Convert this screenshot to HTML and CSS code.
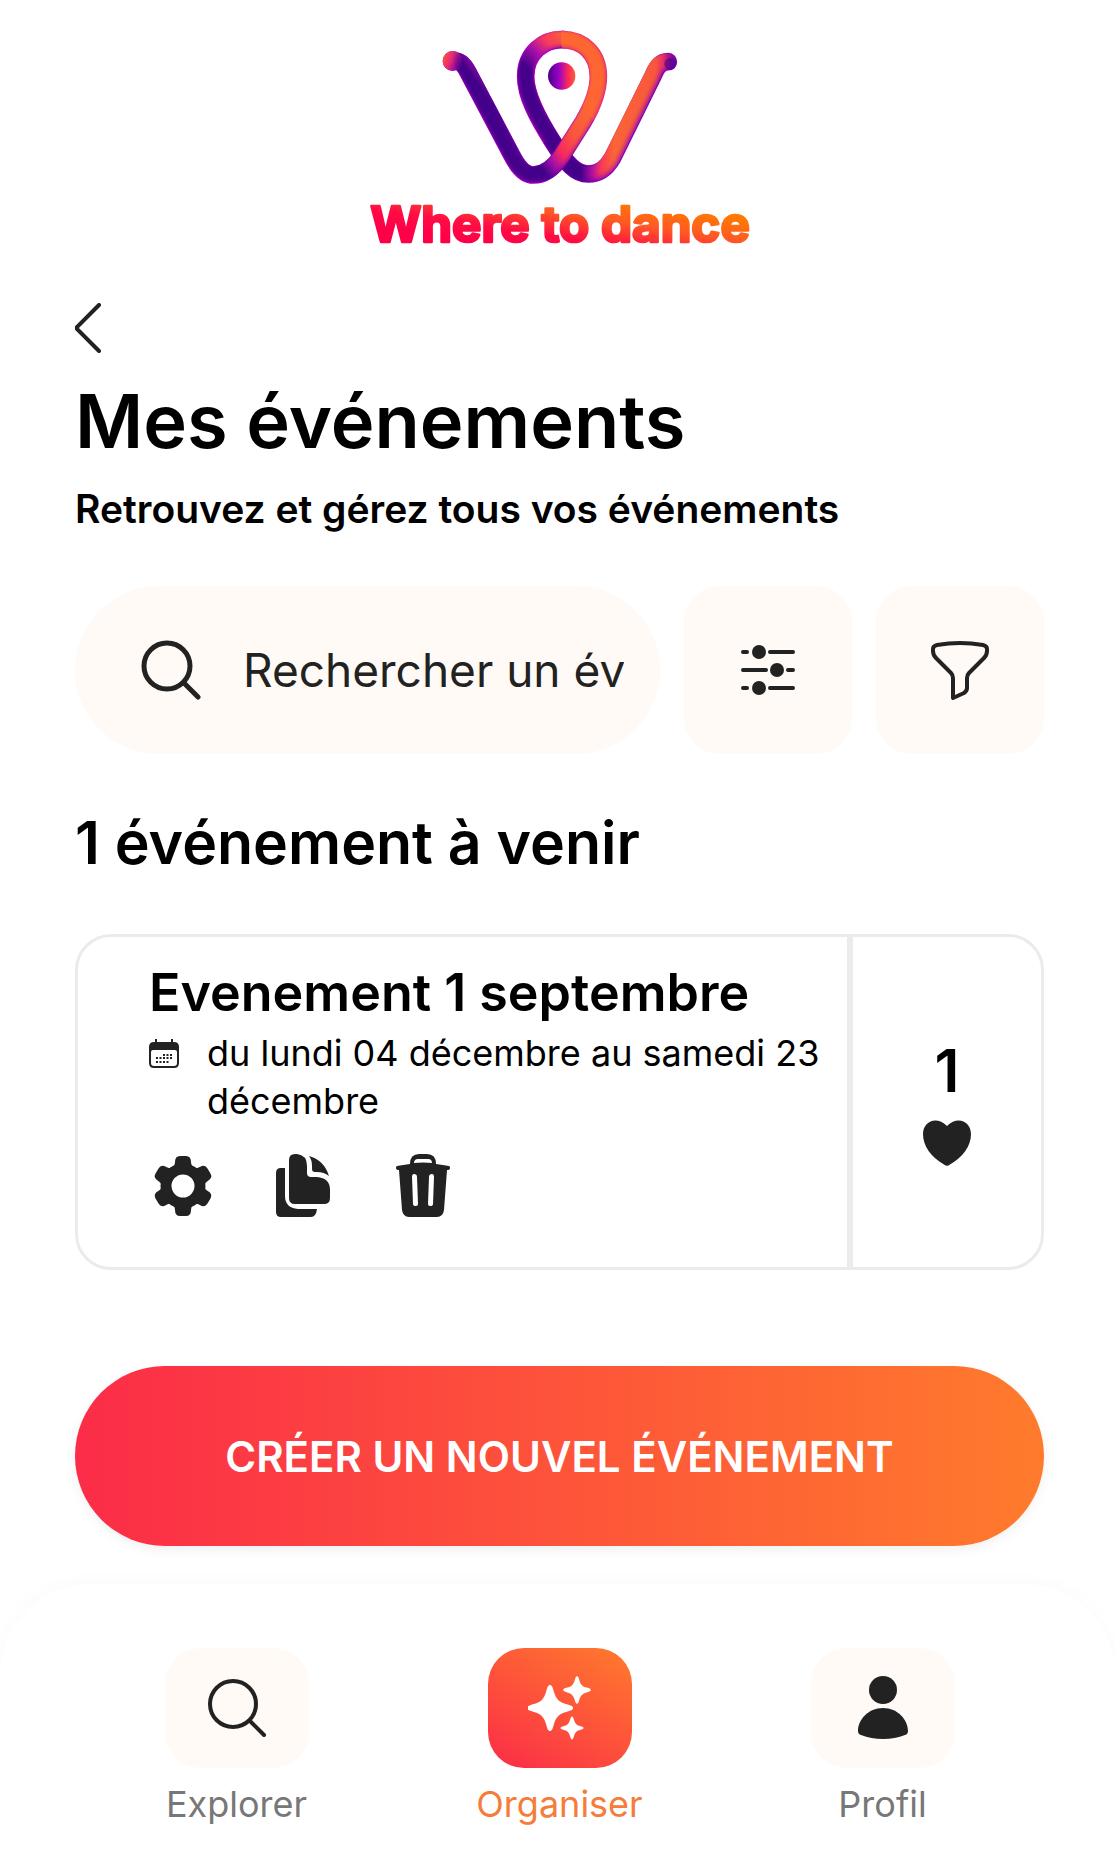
FILE: index.html
```html
<!DOCTYPE html>
<html lang="fr">
<head>
<meta charset="utf-8">
<meta name="viewport" content="width=device-width, initial-scale=1">
<title>Mes événements – Where to dance</title>
<link rel="stylesheet" href="styles.css">
</head>
<body>
<header class="header">
  <svg class="logo" viewBox="0 0 1320 750" role="img" aria-label="Where to dance">
    <defs>
      <path id="front" d="M345 153C362 153 373 166 383 185L515 435C536 476 556 495 580 495C612 495 642 472 665 438L730 335C762 280 775 240 775 200C775 130 727 89 666 89"/>
      <path id="back" d="M672 89C610 86 557 130 557 200C557 255 590 320 640 398C678 458 705 492 745 492C780 492 800 474 817 445L940 196C951 170 962 155 985 155"/>
      <linearGradient id="frontEdge" gradientUnits="userSpaceOnUse" x1="560" y1="480" x2="760" y2="330">
        <stop offset="0" stop-color="#a800c0"/><stop offset=".16" stop-color="#60009c"/><stop offset=".5" stop-color="#8000b0"/><stop offset="1" stop-color="#b000c0"/><stop offset="1.4" stop-color="#e02080"/>
      </linearGradient>
      <linearGradient id="frontCore" gradientUnits="userSpaceOnUse" x1="560" y1="480" x2="760" y2="330">
        <stop offset="0" stop-color="#400088"/><stop offset=".15" stop-color="#400088"/><stop offset=".3" stop-color="#a810a8"/><stop offset=".46" stop-color="#ff2c58"/><stop offset=".7" stop-color="#ff5a38"/><stop offset="1" stop-color="#ff6a2e"/>
      </linearGradient>
      <linearGradient id="backEdge" gradientUnits="userSpaceOnUse" x1="531" y1="0" x2="1010" y2="0">
        <stop offset="0" stop-color="#b000c4"/><stop offset=".2" stop-color="#b000c0"/><stop offset=".35" stop-color="#60009c"/><stop offset=".6" stop-color="#9000c4"/><stop offset="1" stop-color="#8000b0"/>
      </linearGradient>
      <linearGradient id="loopCore" gradientUnits="userSpaceOnUse" x1="668" y1="75" x2="565" y2="180">
        <stop offset="0" stop-color="#ff6234"/><stop offset=".35" stop-color="#fa3c58"/><stop offset=".65" stop-color="#a810a8"/><stop offset="1" stop-color="#400088"/>
      </linearGradient>
      <linearGradient id="legCore" gradientUnits="userSpaceOnUse" x1="730" y1="0" x2="1010" y2="0">
        <stop offset="0" stop-color="#400088"/><stop offset=".12" stop-color="#b010a0"/><stop offset=".22" stop-color="#ff3c50"/><stop offset=".36" stop-color="#ff6a2e"/><stop offset=".8" stop-color="#ff5a38"/><stop offset=".88" stop-color="#f03060"/><stop offset="1" stop-color="#60009c"/>
      </linearGradient>
      <linearGradient id="tip" gradientUnits="userSpaceOnUse" x1="312" y1="145" x2="372" y2="168">
        <stop offset="0" stop-color="#ff4a48"/><stop offset=".35" stop-color="#e02878"/><stop offset="1" stop-color="#8000b0" stop-opacity="0"/>
      </linearGradient>
      <linearGradient id="dot" x1="0" x2="1" y1="0" y2="0">
        <stop offset="0" stop-color="#48008c"/><stop offset=".4" stop-color="#9c00c4"/><stop offset=".75" stop-color="#ff2c58"/><stop offset="1" stop-color="#ff5a30"/>
      </linearGradient>
      <linearGradient id="word" gradientUnits="userSpaceOnUse" x1="645" y1="730" x2="675" y2="540">
        <stop offset="0" stop-color="#ff0048"/><stop offset=".25" stop-color="#ff0c44"/><stop offset=".65" stop-color="#ff5a24"/><stop offset="1" stop-color="#ff7a00"/>
      </linearGradient>
      <clipPath id="loopClip"><path d="M500 0H691V250H670V395H500Z"/></clipPath>
      <clipPath id="legClip"><path d="M500 395H680V250H691V100H1100V600H500Z"/></clipPath>
    </defs>
    <g fill="none">
      <use href="#back" stroke="url(#backEdge)" stroke-width="53" stroke-linecap="round"/>
      <g clip-path="url(#loopClip)" stroke="url(#loopCore)" stroke-opacity=".4">
        <use href="#back" y="-2" stroke-width="50"/><use href="#back" y="-3" stroke-width="46"/><use href="#back" y="-4" stroke-width="41"/><use href="#back" y="-5" stroke-width="36"/><use href="#back" y="-5" stroke-width="31"/><use href="#back" y="-5" stroke-width="26"/>
      </g>
      <g clip-path="url(#legClip)" stroke="url(#legCore)" stroke-opacity=".4" stroke-linecap="round">
        <use href="#back" x="-2" y="-1" stroke-width="49"/><use href="#back" x="-4" y="-2" stroke-width="44"/><use href="#back" x="-6" y="-3" stroke-width="39"/><use href="#back" x="-7" y="-4" stroke-width="35"/><use href="#back" x="-8" y="-5" stroke-width="31"/><use href="#back" x="-9" y="-6" stroke-width="27"/>
      </g>
      <circle cx="991" cy="162" r="18" fill="#48008c" fill-opacity=".6"/>
      <use href="#front" stroke="url(#frontEdge)" stroke-width="53"/>
      <circle cx="338" cy="153" r="30" fill="#8000b0"/>
      <g stroke="url(#frontCore)" stroke-opacity=".4">
        <use href="#front" y="-1" stroke-width="50"/><use href="#front" x="-1" y="-2" stroke-width="46"/><use href="#front" x="-2" y="-3" stroke-width="41"/><use href="#front" x="-2" y="-4" stroke-width="36"/><use href="#front" x="-3" y="-5" stroke-width="31"/><use href="#front" x="-3" y="-5" stroke-width="26"/>
      </g>
      <circle cx="338" cy="153" r="30" fill="url(#tip)"/>
    </g>
    <circle cx="665" cy="198" r="41" fill="url(#dot)"/>
    <text class="wordmark" x="660" y="696" text-anchor="middle" fill="url(#word)" stroke="url(#word)">Where to dance</text>
  </svg>
</header>

<main class="content">
  <a class="back" href="#" aria-label="Retour">
    <svg width="28" height="50" viewBox="0 0 28 50" fill="none" stroke="currentColor" stroke-width="4" stroke-linecap="round" stroke-linejoin="round"><path d="M24 2L1 25L24 48"/></svg>
  </a>
  <h1 class="title">Mes événements</h1>
  <p class="subtitle">Retrouvez et gérez tous vos événements</p>

  <form class="tools">
    <label class="search">
      <svg class="search-icon" width="60" height="60" viewBox="0 0 60 60" fill="none" stroke="currentColor" stroke-width="5" stroke-linecap="round"><circle cx="26" cy="26" r="23"/><path d="M43 43L57 57"/></svg>
      <input class="search-input" type="text" placeholder="Rechercher un év" aria-label="Rechercher un événement">
    </label>
    <button class="tool" type="button" aria-label="Options">
      <svg width="56" height="52" viewBox="0 0 56 52" fill="currentColor" stroke="currentColor" stroke-width="4" stroke-linecap="round"><path d="M3 8H7M30 8H53M3 26H26M48 26H53M3 44H7M30 44H53"/><g stroke="none"><circle cx="19" cy="8" r="7"/><circle cx="37" cy="26" r="7"/><circle cx="19" cy="44" r="7"/></g></svg>
    </button>
    <button class="tool" type="button" aria-label="Filtrer">
      <svg width="60" height="60" viewBox="0 0 60 60" fill="none" stroke="currentColor" stroke-width="4" stroke-linejoin="round"><path d="M7 5Q30 1 53 5Q57 6 57 9V11Q57 15 54 18L39 33Q37 35 37 38V48Q37 51 34 53L23 58V38Q23 35 21 33L6 18Q3 15 3 11V9Q3 6 7 5Z"/></svg>
    </button>
  </form>

  <h2 class="section-title">1 événement à venir</h2>

  <article class="card">
    <div class="card-main">
      <h3 class="card-title">Evenement 1 septembre</h3>
      <div class="date">
        <svg class="date-icon" width="30" height="30" viewBox="0 0 30 30" fill="currentColor"><path d="M7 0V4M23 0V4" stroke="currentColor" stroke-width="2"/><path fill-rule="evenodd" d="M5 3H25Q30 3 30 8V24Q30 29 25 29H5Q0 29 0 24V8Q0 3 5 3ZM4 11Q2 11 2 13V24Q2 27 5 27H25Q28 27 28 24V13Q28 11 26 11Z"/><path d="M14 16H24M7 19H24M7 23H21" stroke="currentColor" stroke-width="2" stroke-dasharray="2 1.5"/></svg>
        <p class="date-text">du lundi 04 décembre au samedi 23 décembre</p>
      </div>
      <div class="actions">
        <button class="action" type="button" aria-label="Paramètres">
          <svg width="64" height="64" viewBox="-32 -32 64 64" fill="currentColor"><defs><path id="tooth" d="M-13 -17Q-8 -19 -8 -24Q-8 -30 -3 -30H3Q8 -30 8 -24Q8 -19 13 -17L8 -12H-8Z"/></defs><circle r="17" fill="none" stroke="currentColor" stroke-width="11"/><use href="#tooth"/><use href="#tooth" transform="rotate(60)"/><use href="#tooth" transform="rotate(120)"/><use href="#tooth" transform="rotate(180)"/><use href="#tooth" transform="rotate(240)"/><use href="#tooth" transform="rotate(300)"/></svg>
        </button>
        <button class="action" type="button" aria-label="Dupliquer">
          <svg width="64" height="64" viewBox="0 0 64 64" fill="currentColor"><path d="M14 14H10Q5 14 5 19V58Q5 63 10 63H40Q45 63 46 55H27Q14 54 14 42Z"/><path d="M24 0H26Q36 1 36 12V19Q36 23 40 23H46Q59 24 59 36V44Q59 50 53 50H24Q18 50 18 44V6Q18 0 24 0Z"/><path d="M38 2Q53 6 58 22Q53 18 46 18H44Q41 18 41 15V12Q41 6 38 2Z"/></svg>
        </button>
        <button class="action" type="button" aria-label="Supprimer">
          <svg width="64" height="64" viewBox="0 0 64 64" fill="currentColor"><path fill-rule="evenodd" d="M19 10Q19 0 28 0H36Q45 0 45 10Q52 11 58 12Q59 12 59 14Q59 16 56 16L53 56Q52 63 46 63H18Q12 63 11 56L8 16Q5 16 5 14Q5 12 6 12Q12 11 19 10ZM23 9Q32 8 41 9Q41 5 37 5H27Q23 5 23 9ZM21 23L22 50Q22 52 25 52Q27 52 27 50L26 23Q26 20 23 20Q21 20 21 23ZM38 23L37 50Q37 52 39 52Q42 52 42 50L43 23Q43 20 41 20Q38 20 38 23Z"/></svg>
        </button>
      </div>
    </div>
    <div class="card-likes">
      <span class="count">1</span>
      <svg width="50" height="46" viewBox="0 0 50 46" fill="#222"><path d="M25 6C36 -5 49 2 49 14C49 26 41 37 28 44.500Q25 47 22 44.500C9 37 1 26 1 14C1 2 14 -5 25 6Z"/></svg>
    </div>
  </article>

  <button class="create" type="button">CRÉER UN NOUVEL ÉVÉNEMENT</button>
</main>

<nav class="tabs">
  <a class="tab" href="#">
    <span class="tab-icon"><svg width="60" height="60" viewBox="0 0 60 60" fill="none" stroke="currentColor" stroke-width="4" stroke-linecap="round"><circle cx="26" cy="26" r="23"/><path d="M43 43L57 57"/></svg></span>
    <span class="tab-label">Explorer</span>
  </a>
  <a class="tab tab-active" href="#">
    <span class="tab-icon"><svg width="64" height="64" viewBox="0 0 64 64" fill="currentColor"><defs><path id="spark" d="M-23 0C-23 -2 -21 -2.500 -16 -4C-9 -6 -6 -9 -4 -16C-2.500 -21 -2 -23 0 -23S2.500 -21 4 -16C6 -9 9 -6 16 -4C21 -2.500 23 -2 23 0S21 2.500 16 4C9 6 6 9 4 16C2.500 21 2 23 0 23S-2.500 21 -4 16C-6 9 -9 6 -16 4C-21 2.500 -23 2 -23 0Z"/></defs><use href="#spark" transform="translate(22 32)"/><use href="#spark" transform="translate(49 14) scale(.6)"/><use href="#spark" transform="translate(44 52) scale(.5)"/></svg></span>
    <span class="tab-label">Organiser</span>
  </a>
  <a class="tab" href="#">
    <span class="tab-icon"><svg width="64" height="64" viewBox="0 0 64 64" fill="currentColor"><circle cx="32" cy="14" r="14"/><path d="M32 32C47 32 57 44 57 55Q57 58 54 59Q44 63 32 63T10 59Q7 58 7 55C7 44 17 32 32 32Z"/></svg></span>
    <span class="tab-label">Profil</span>
  </a>
</nav>
</body>
</html>
```
FILE: styles.css
```css
* {
  box-sizing: border-box;
}

body {
  margin: 0;
  background: #fff;
  color: #000;
  font-family: Inter, "Liberation Sans", sans-serif;
}

h1, h2, h3, p {
  margin: 0;
}

svg {
  display: block;
  flex: none;
}

button {
  border: 0;
  padding: 0;
  font: inherit;
  cursor: pointer;
}

.header {
  display: flex;
  justify-content: center;
  padding: 10px 71px 0 75px;
}

.logo {
  width: 440px;
  height: 250px;
}

.wordmark {
  font-family: Inter, sans-serif;
  font-size: 148px;
  font-weight: 700;
  stroke-width: 8px;
  stroke-linejoin: round;
}

.content {
  display: flex;
  flex-direction: column;
  padding: 43px 71px 38px 75px;
}

.back {
  align-self: flex-start;
  color: #222;
}

.title {
  margin-top: 22px;
  font-size: 74px;
  font-weight: 600;
  line-height: 92px;
}

.subtitle {
  margin-top: 18px;
  font-size: 39px;
  font-weight: 600;
  line-height: 48px;
}

.tools {
  display: flex;
  gap: 24px;
  margin-top: 53px;
}

.search {
  display: flex;
  flex: 1;
  align-items: center;
  gap: 42px;
  min-width: 0;
  height: 168px;
  padding: 0 36px 0 66px;
  border-radius: 84px;
  background: #fffaf5;
  color: #222;
}

.search-input {
  flex: 1;
  min-width: 0;
  border: 0;
  padding: 0;
  outline: 0;
  background: none;
  color: #222;
  font: 400 46px/60px Inter, "Liberation Sans", sans-serif;
}

.search-input::placeholder {
  color: #222;
  opacity: 1;
}

.tool {
  display: flex;
  flex: none;
  align-items: center;
  justify-content: center;
  width: 168px;
  height: 168px;
  border-radius: 36px;
  background: #fffaf5;
  color: #222;
}

.section-title {
  margin-top: 53px;
  font-size: 59px;
  font-weight: 600;
  line-height: 72px;
}

.card {
  display: flex;
  margin-top: 55px;
  border: 3px solid #ebebeb;
  border-radius: 36px;
}

.card-main {
  flex: 1;
  min-width: 0;
  padding: 24px 20px 49px 71px;
}

.card-title {
  font-size: 52px;
  font-weight: 600;
  line-height: 64px;
}

.date {
  display: flex;
  gap: 28px;
  margin-top: 4px;
  font-size: 36px;
  line-height: 48px;
}

.date-icon {
  margin-top: 10px;
  color: #222;
}

.actions {
  display: flex;
  gap: 56px;
  margin-top: 29px;
  padding-left: 2px;
}

.action {
  background: none;
  color: #222;
}

.card-likes {
  display: flex;
  flex: none;
  flex-direction: column;
  align-items: center;
  justify-content: center;
  gap: 17px;
  width: 194px;
  border-left: 6px solid #ebebeb;
}

.count {
  font-size: 59px;
  font-weight: 600;
  line-height: 64px;
}

.create {
  height: 180px;
  margin-top: 96px;
  border-radius: 90px;
  background: linear-gradient(90deg, #fb2c48, #ff7b2c);
  box-shadow: 0 4px 12px rgba(0, 0, 0, .06);
  color: #fff;
  font-size: 42px;
  font-weight: 600;
}

.tabs {
  display: flex;
  padding: 64px 71px 23px 75px;
  border-radius: 90px 90px 0 0;
  background: #fff;
  box-shadow: 0 -4px 18px rgba(0, 0, 0, .02);
}

.tab {
  display: flex;
  flex: 1;
  flex-direction: column;
  align-items: center;
  gap: 14px;
  color: #777;
  text-decoration: none;
}

.tab-icon {
  display: flex;
  align-items: center;
  justify-content: center;
  width: 144px;
  height: 120px;
  border-radius: 36px;
  background: #fffaf5;
  color: #222;
}

.tab-label {
  font-size: 36px;
  line-height: 44px;
}

.tab-active {
  color: #f57c3a;
}

.tab-active .tab-icon {
  background: linear-gradient(30deg, #fb2c48, #ff7b2c);
  color: #fff;
}
```
